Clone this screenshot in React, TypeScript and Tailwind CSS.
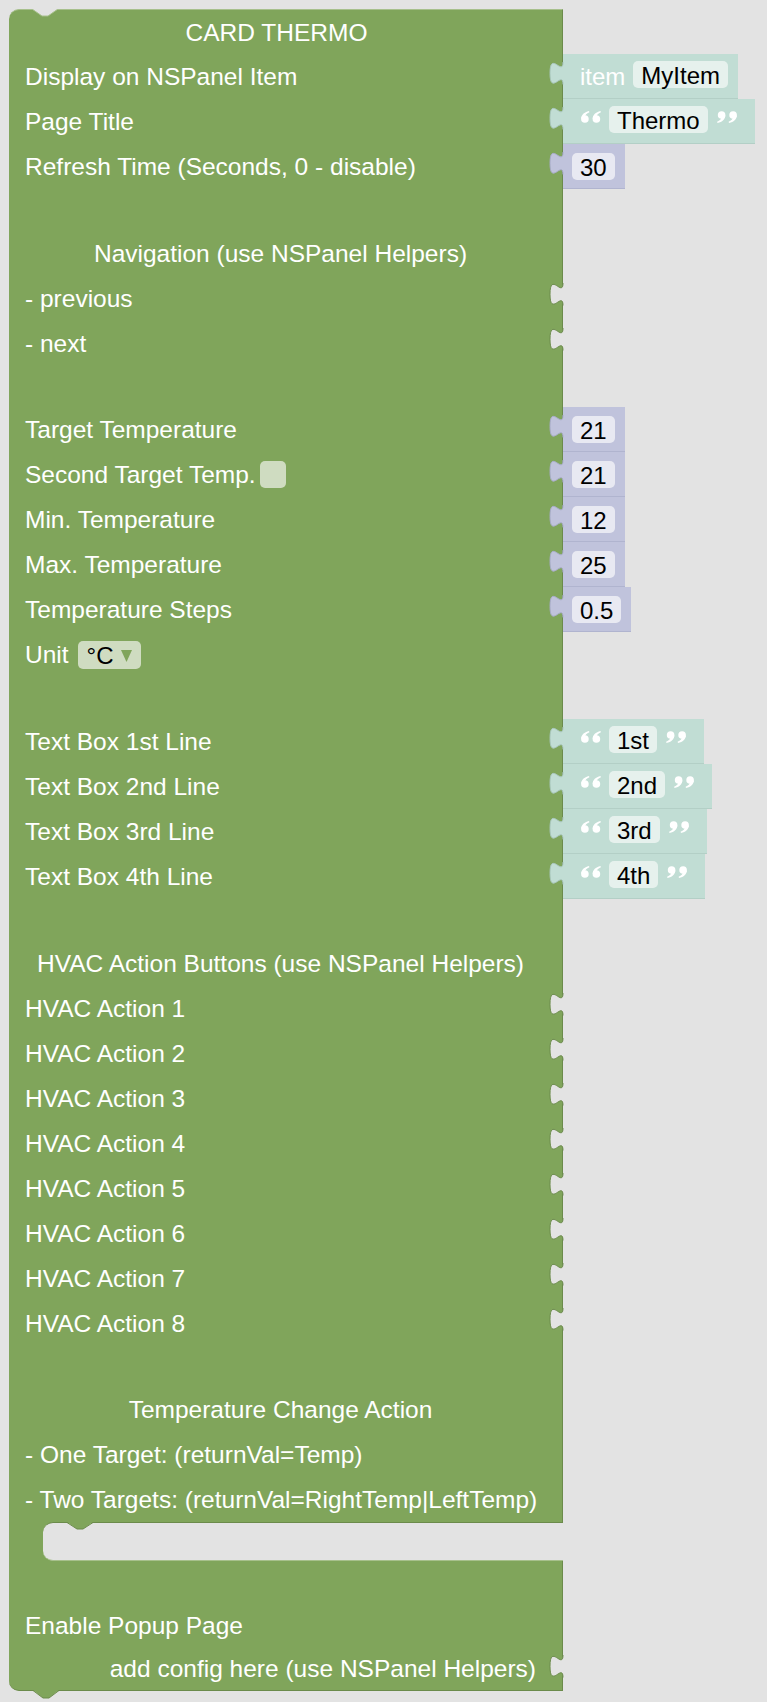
import React from 'react';

const BG = '#e3e3e3';
const TEAL = '#c1ddd4';
const LAV = '#c0c3dc';

function Tab({ fill, stroke = '#6b8b4b' }: { fill: string; stroke?: string }) {
  return (
    <svg
      className="absolute right-[-1px] top-[7.5px] overflow-visible"
      width="14"
      height="23"
      viewBox="0 0 14 23"
    >
      <path d="M14,0 C14,15 1,-12 1,11.25 S14,7.5 14,22.5 Z" fill={fill} />
      <path d="M14,0 C14,15 1,-12 1,11.25 S14,7.5 14,22.5" fill="none" stroke={stroke} strokeWidth="1" />
    </svg>
  );
}

function OpenQuote() {
  return (
    <svg width="20" height="12" viewBox="0 0 20 12" className="mt-[12px] self-start">
      <g fill="white">
        <circle cx="3.9" cy="8" r="3.8" />
        <path d="M0.2,7.8 C0.2,3.9 3.2,1.1 8,0 L8.4,1.3 C5.6,2.4 4.2,4 4,6 Z" />
        <circle cx="15.4" cy="8" r="3.8" />
        <path d="M11.7,7.8 C11.7,3.9 14.7,1.1 19.5,0 L19.9,1.3 C17.1,2.4 15.7,4 15.5,6 Z" />
      </g>
    </svg>
  );
}

function CloseQuote() {
  return (
    <svg width="20" height="12" viewBox="0 0 20 12" className="mt-[12px] self-start">
      <g fill="white">
        <circle cx="4.6" cy="4" r="3.8" />
        <path d="M8.3,4.2 C8.3,8.1 5.3,10.9 0.5,12 L0.1,10.7 C2.9,9.6 4.3,8 4.5,6 Z" />
        <circle cx="16.1" cy="4" r="3.8" />
        <path d="M19.8,4.2 C19.8,8.1 16.8,10.9 12,12 L11.6,10.7 C14.4,9.6 15.8,8 16,6 Z" />
      </g>
    </svg>
  );
}

function Field({ children, teal }: { children: React.ReactNode; teal?: boolean }) {
  return (
    <span
      className={
        'inline-flex h-[27px] items-center rounded-[5px] px-2 pt-[3px] text-[24px] leading-none text-black ' +
        (teal ? 'bg-[#e6f1ed]' : 'bg-[#e8e9f2]')
      }
    >
      {children}
    </span>
  );
}

function ItemBlock() {
  return (
    <div className="flex h-[45px] items-center border-b border-[#b3cfc6] bg-[#c1ddd4] pl-[17px] pr-[10px]">
      <span className="pt-[2px] text-[24px] leading-none text-white">item</span>
      <span className="ml-[8px]">
        <Field teal>MyItem</Field>
      </span>
    </div>
  );
}

function TextBlock({ value }: { value: string }) {
  return (
    <div className="flex h-[45px] items-center border-b border-[#b3cfc6] bg-[#c1ddd4] pl-[18px] pr-[18px]">
      <OpenQuote />
      <span className="ml-[8px]">
        <Field teal>{value}</Field>
      </span>
      <span className="ml-[9px] flex self-stretch">
        <CloseQuote />
      </span>
    </div>
  );
}

function NumBlock({ value }: { value: string }) {
  return (
    <div className="flex h-[45px] items-center border-b border-[#b0b4cf] bg-[#c0c3dc] pl-[9px] pr-[10px]">
      <Field>{value}</Field>
    </div>
  );
}

type RowProps = {
  children?: React.ReactNode;
  tab?: string;
  tabStroke?: string;
  attach?: React.ReactNode;
  className?: string;
  extra?: React.ReactNode;
};

function Row({ children, tab, tabStroke, attach, className = '', extra }: RowProps) {
  return (
    <div className="flex">
      <div
        className={
          'relative flex h-[45px] w-[554px] shrink-0 items-center border-r border-[#6b8b4b] bg-[#80a55b] pl-4 pt-[2px] text-[24.5px] leading-none text-white ' +
          className
        }
      >
        {children}
        {tab && <Tab fill={tab} stroke={tabStroke} />}
        {extra}
      </div>
      {attach}
    </div>
  );
}

function Spacer({ h }: { h: string }) {
  return <div className={'w-[554px] border-r border-[#6b8b4b] bg-[#80a55b] ' + h} />;
}

export default function App() {
  const hvac = [1, 2, 3, 4, 5, 6, 7, 8];
  return (
    <div className="min-h-[1702px] w-full bg-[#e3e3e3] pl-[9px] pt-[9px] font-['Liberation_Sans',Arial,sans-serif]">
      <div className="flex flex-col">
        {/* Title */}
        <Row
          className="justify-center rounded-tl-[10px] border-t border-t-[#a7c08c] pr-[34px]"
          extra={
            <svg className="absolute left-[23px] top-[-1px]" width="26" height="8" viewBox="0 0 26 8">
              <polygon points="0,0 10,7 16,7 26,0" fill={BG} />
              <polyline points="0,0 10,7 16,7 26,0" fill="none" stroke="#a7c08c" strokeWidth="1" />
            </svg>
          }
        >
          <span>CARD THERMO</span>
        </Row>
        <Row tab={TEAL} tabStroke="#a9c7bd" attach={<ItemBlock />}>
          <span>Display on NSPanel Item</span>
        </Row>
        <Row tab={TEAL} tabStroke="#a9c7bd" attach={<TextBlock value="Thermo" />}>
          <span>Page Title</span>
        </Row>
        <Row tab={LAV} tabStroke="#a8acc9" attach={<NumBlock value="30" />}>
          <span>Refresh Time (Seconds, 0 - disable)</span>
        </Row>
        <Spacer h="h-[41.5px]" />
        <Row className="justify-center pr-[26px]">
          <span>Navigation (use NSPanel Helpers)</span>
        </Row>
        <Row tab={BG}>
          <span>- previous</span>
        </Row>
        <Row tab={BG}>
          <span>- next</span>
        </Row>
        <Spacer h="h-[41.5px]" />
        <Row tab={LAV} tabStroke="#a8acc9" attach={<NumBlock value="21" />}>
          <span>Target Temperature</span>
        </Row>
        <Row tab={LAV} tabStroke="#a8acc9" attach={<NumBlock value="21" />}>
          <span>Second Target Temp.</span>
          <span className="mb-[2px] ml-[4px] inline-block h-[27px] w-[26px] rounded-[5px] bg-[#cfdcc1]" />
        </Row>
        <Row tab={LAV} tabStroke="#a8acc9" attach={<NumBlock value="12" />}>
          <span>Min. Temperature</span>
        </Row>
        <Row tab={LAV} tabStroke="#a8acc9" attach={<NumBlock value="25" />}>
          <span>Max. Temperature</span>
        </Row>
        <Row tab={LAV} tabStroke="#a8acc9" attach={<NumBlock value="0.5" />}>
          <span>Temperature Steps</span>
        </Row>
        <Row>
          <span>Unit</span>
          <span className="mb-[2px] ml-[9px] inline-flex h-[28px] items-center rounded-[5px] bg-[#cfdcc1] px-[9px] pt-[2px]">
            <span className="text-[24px] text-black">°C</span>
            <svg className="ml-[7px] mt-[1px]" width="11" height="12" viewBox="0 0 11 12">
              <polygon points="0,0 11,0 5.5,12" fill="#80a55b" />
            </svg>
          </span>
        </Row>
        <Spacer h="h-[42px]" />
        <Row tab={TEAL} tabStroke="#a9c7bd" attach={<TextBlock value="1st" />}>
          <span>Text Box 1st Line</span>
        </Row>
        <Row tab={TEAL} tabStroke="#a9c7bd" attach={<TextBlock value="2nd" />}>
          <span>Text Box 2nd Line</span>
        </Row>
        <Row tab={TEAL} tabStroke="#a9c7bd" attach={<TextBlock value="3rd" />}>
          <span>Text Box 3rd Line</span>
        </Row>
        <Row tab={TEAL} tabStroke="#a9c7bd" attach={<TextBlock value="4th" />}>
          <span>Text Box 4th Line</span>
        </Row>
        <Spacer h="h-[41.5px]" />
        <Row className="justify-center pr-[26px]">
          <span>HVAC Action Buttons (use NSPanel Helpers)</span>
        </Row>
        {hvac.map((n) => (
          <Row key={n} tab={BG}>
            <span>HVAC Action {n}</span>
          </Row>
        ))}
        <Spacer h="h-[41.5px]" />
        <Row className="justify-center pr-[26px]">
          <span>Temperature Change Action</span>
        </Row>
        <Row>
          <span>- One Target: (returnVal=Temp)</span>
        </Row>
        <Row>
          <span>- Two Targets: (returnVal=RightTemp|LeftTemp)</span>
        </Row>
        {/* statement input */}
        <div className="relative flex h-[39px] w-[554px] bg-[#80a55b]">
          <div className="ml-[34px] flex-1 rounded-l-[10px] border-b border-t border-b-[#a7c08c] border-t-[#6b8b4b] bg-[#e3e3e3]" />
          <svg className="absolute left-[58px] top-0" width="26" height="8" viewBox="0 0 26 8">
            <polygon points="0,0 10,7 16,7 26,0" fill="#80a55b" />
            <polyline points="0,0.5 10,7 16,7 26,0.5" fill="none" stroke="#6b8b4b" strokeWidth="1" />
          </svg>
        </div>
        <Spacer h="h-[41.5px]" />
        <Row>
          <span>Enable Popup Page</span>
        </Row>
        <div className="flex">
          <div className="relative flex h-[43px] w-[554px] shrink-0 items-center justify-end rounded-bl-[10px] border-b border-r border-[#6b8b4b] bg-[#80a55b] pr-[26px] pt-[2px] text-[24.5px] leading-none text-white">
            <span>add config here (use NSPanel Helpers)</span>
            <Tab fill={BG} />
            <svg className="absolute bottom-[-9px] left-[24px]" width="26" height="9" viewBox="0 0 26 9">
              <polygon points="0,0 10,8 16,8 26,0" fill="#80a55b" />
              <polyline points="0,0.5 10,8 16,8 26,0.5" fill="none" stroke="#6b8b4b" strokeWidth="1" />
            </svg>
          </div>
        </div>
      </div>
    </div>
  );
}
